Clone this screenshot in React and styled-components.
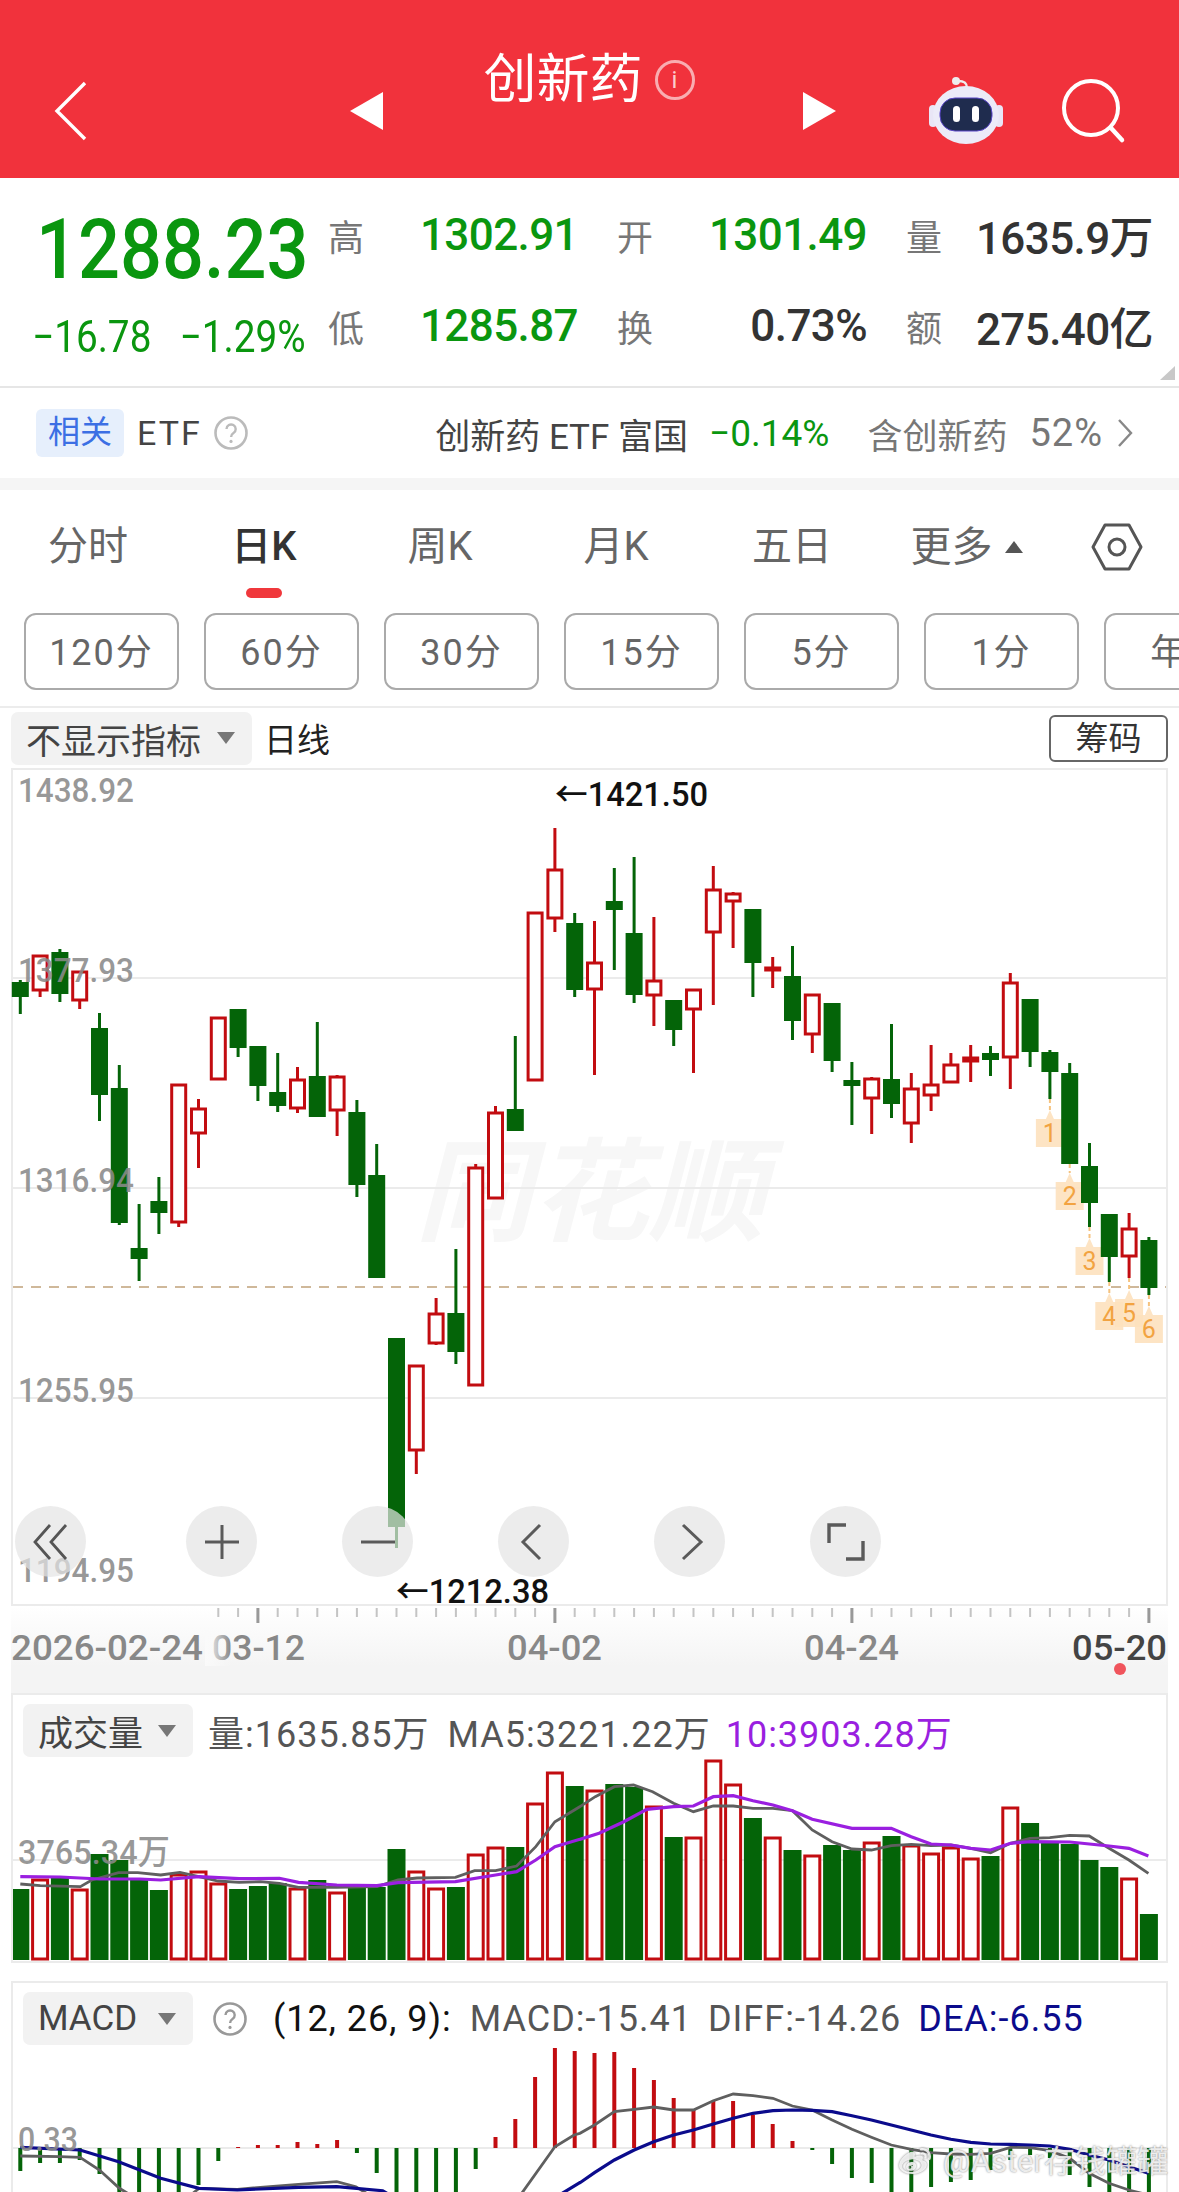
import styled, { createGlobalStyle } from "styled-components";
import { FaWeibo } from "react-icons/fa";

const GlobalStyle = createGlobalStyle`
    html, body {
        margin: 0;
        padding: 0;
        background: #fff;
    }
    body {
        font-family: Roboto, "Noto Sans CJK SC", sans-serif;
        overflow: hidden;
    }
    svg text {
        font-family: Roboto, "Noto Sans CJK SC", sans-serif;
    }
`;

const GREEN_TEXT = "#0a960f";
const CANDLE_GREEN = "#046408";
const CANDLE_RED = "#c20c10";

// [colour, body top, body bottom, wick high, wick low] in page pixels
const candles = [
    ["g", 982, 997, 980, 1014], ["r", 955, 991, 955, 997], ["g", 952, 994, 949, 1002], ["r", 971, 1001, 971, 1009],
    ["g", 1028, 1095, 1013, 1121], ["g", 1088, 1223, 1065, 1225], ["g", 1248, 1259, 1204, 1281], ["g", 1201, 1213, 1177, 1234],
    ["r", 1084, 1223, 1084, 1227], ["r", 1108, 1134, 1099, 1168], ["r", 1017, 1080, 1017, 1080], ["g", 1009, 1048, 1009, 1057],
    ["g", 1046, 1086, 1046, 1101], ["g", 1092, 1106, 1053, 1112], ["r", 1079, 1109, 1067, 1113], ["g", 1076, 1117, 1022, 1117],
    ["r", 1076, 1111, 1075, 1136], ["g", 1112, 1185, 1100, 1197], ["g", 1175, 1278, 1144, 1278], ["g", 1338, 1527, 1338, 1548],
    ["r", 1365, 1451, 1365, 1474], ["r", 1313, 1344, 1298, 1345], ["g", 1313, 1352, 1249, 1364], ["r", 1167, 1386, 1164, 1386],
    ["r", 1112, 1199, 1106, 1199], ["g", 1109, 1131, 1036, 1131], ["r", 912, 1081, 912, 1081], ["r", 869, 919, 828, 932],
    ["g", 923, 990, 913, 997], ["r", 962, 990, 921, 1075], ["g", 901, 910, 868, 970], ["g", 933, 995, 857, 1003],
    ["r", 980, 996, 917, 1026], ["g", 1000, 1030, 1000, 1046], ["r", 989, 1010, 989, 1073], ["r", 889, 933, 866, 1005],
    ["r", 893, 902, 892, 948], ["g", 909, 963, 909, 997], ["r", 967, 971, 957, 988], ["g", 976, 1021, 946, 1040],
    ["r", 994, 1035, 994, 1053], ["g", 1003, 1061, 1003, 1072], ["g", 1080, 1086, 1062, 1125], ["r", 1078, 1099, 1077, 1134],
    ["g", 1079, 1104, 1024, 1118], ["r", 1088, 1124, 1073, 1143], ["r", 1084, 1096, 1045, 1111], ["r", 1064, 1083, 1053, 1083],
    ["r", 1057, 1062, 1045, 1082], ["g", 1053, 1060, 1046, 1076], ["r", 982, 1058, 973, 1089], ["g", 999, 1052, 999, 1067],
    ["g", 1052, 1072, 1050, 1099], ["g", 1073, 1164, 1063, 1164], ["g", 1166, 1203, 1143, 1227], ["g", 1214, 1257, 1214, 1282],
    ["r", 1228, 1257, 1213, 1278], ["g", 1240, 1288, 1237, 1295],
];

const xOf = (i) => 20.3 + 19.8 * i;

// tops of the volume bars, as y on the page
const volumeTops = [
    1889, 1879, 1877, 1889, 1854, 1860, 1880, 1890, 1874, 1871, 1883, 1889, 1886, 1883, 1888, 1880, 1892, 1887, 1887, 1849,
    1871, 1888, 1887, 1854, 1847, 1847, 1803, 1772, 1786, 1790, 1784, 1787, 1806, 1837, 1837, 1760, 1784, 1818, 1837, 1850,
    1855, 1845, 1850, 1842, 1836, 1845, 1853, 1847, 1858, 1856, 1807, 1823, 1843, 1844, 1860, 1867, 1878, 1914,
];

// macd bar ends, as y on the page (zero line at 2148)
const macdEnds = [
    2171, 2163, 2163, 2160, 2174, 2200, 2200, 2200, 2200, 2185, 2161, 2147, 2145, 2145, 2142, 2144, 2140, 2153, 2173, 2200,
    2200, 2200, 2200, 2169, 2137, 2119, 2077, 2048, 2051, 2053, 2052, 2068, 2080, 2098, 2110, 2101, 2101, 2115, 2124, 2141,
    2150, 2164, 2178, 2183, 2200, 2200, 2187, 2182, 2180, 2170, 2160, 2155, 2158, 2175, 2187, 2200, 2200, 2200,
];

// traced from zooms: left half [u, v] maps with 2.613, right half with 2.618
const left = (pts) => pts.map(([u, v]) => `${(u / 2.613).toFixed(1)},${(1680 + v / 3).toFixed(1)}`).join(" ");
const right = (pts) => pts.map(([u, v]) => `${(580 + u / 2.618).toFixed(1)},${(1680 + v / 3).toFixed(1)}`).join(" ");

const volumeGray =
    left([[53, 612], [105, 617], [210, 620], [240, 600], [310, 578], [360, 578], [420, 585], [470, 577], [520, 590], [570, 603], [625, 607], [680, 605], [730, 610], [780, 622], [880, 622], [985, 620], [1040, 600], [1090, 594], [1190, 592], [1240, 572], [1295, 572], [1350, 558], [1400, 500], [1450, 425], [1515, 380]]) +
    " " +
    right([[0, 380], [40, 350], [90, 320], [140, 315], [190, 335], [245, 370], [297, 395], [349, 378], [401, 378], [453, 385], [505, 385], [556, 392], [608, 450], [660, 485], [712, 507], [763, 510], [815, 497], [867, 493], [919, 497], [971, 495], [1023, 505], [1075, 518], [1127, 490], [1178, 475], [1230, 473], [1282, 466], [1333, 468], [1385, 505], [1437, 540], [1488, 580]]);

const volumePurple =
    left([[53, 590], [157, 591], [261, 597], [365, 597], [420, 600], [520, 590], [625, 596], [730, 595], [780, 607], [880, 615], [985, 617], [1040, 608], [1190, 605], [1295, 585], [1350, 575], [1400, 540], [1450, 500], [1515, 478]]) +
    " " +
    right([[0, 478], [50, 460], [115, 425], [175, 388], [245, 380], [297, 378], [349, 350], [401, 347], [453, 362], [505, 375], [556, 392], [608, 418], [712, 445], [815, 445], [867, 470], [919, 492], [971, 495], [1023, 505], [1075, 510], [1127, 490], [1178, 485], [1282, 486], [1385, 498], [1437, 505], [1488, 528]]);

const macdGrayA = left([[53, 1428], [157, 1430], [209, 1432], [260, 1470], [312, 1525], [420, 1600]]);
const macdGrayB = left([[440, 1600], [520, 1525], [620, 1528], [780, 1513], [880, 1505], [930, 1520], [1000, 1570]]);
const macdGrayC =
    left([[1300, 1620], [1360, 1545], [1450, 1400], [1500, 1365], [1515, 1360]]) +
    " " +
    right([[0, 1360], [38, 1335], [90, 1295], [142, 1288], [193, 1281], [245, 1290], [297, 1290], [349, 1262], [401, 1242], [453, 1247], [505, 1255], [556, 1278], [608, 1290], [660, 1320], [712, 1348], [763, 1372], [815, 1395], [867, 1408], [919, 1418], [971, 1422], [1023, 1423], [1075, 1420], [1127, 1402], [1178, 1403], [1230, 1412], [1282, 1435], [1333, 1480], [1385, 1510], [1437, 1530], [1488, 1545]]);
const macdBlueA = left([[53, 1402], [209, 1410], [310, 1445], [420, 1495], [520, 1525], [620, 1530], [780, 1522], [880, 1520], [1000, 1532], [1040, 1560]]);
const macdBlueB =
    left([[1440, 1560], [1515, 1508]]) +
    " " +
    right([[0, 1508], [38, 1478], [90, 1440], [142, 1410], [193, 1385], [245, 1365], [297, 1350], [349, 1332], [401, 1315], [453, 1300], [505, 1292], [556, 1290], [608, 1291], [660, 1295], [712, 1307], [763, 1320], [815, 1335], [867, 1350], [919, 1365], [971, 1378], [1023, 1387], [1075, 1392], [1127, 1393], [1178, 1395], [1230, 1398], [1282, 1408], [1333, 1425], [1385, 1440], [1437, 1460], [1488, 1480]]);

const markers = [
    { n: 1, i: 52, from: 1099, y: 1110 },
    { n: 2, i: 53, from: 1164, y: 1173 },
    { n: 3, i: 54, from: 1227, y: 1238 },
    { n: 4, i: 55, from: 1282, y: 1293 },
    { n: 5, i: 56, from: 1278, y: 1290 },
    { n: 6, i: 57, from: 1295, y: 1306 },
];

const yLabels = [
    ["1438.92", 802],
    ["1377.93", 982],
    ["1316.94", 1192],
    ["1255.95", 1402],
    ["1194.95", 1582],
];

const Page = styled.div`
    position: relative;
    width: 1179px;
    height: 2192px;
    overflow: hidden;
    background: #fff;
`;

const Header = styled.header`
    display: flex;
    align-items: center;
    box-sizing: border-box;
    height: 178px;
    padding: 44px 0 0 54px;
    background: #f1323c;
    color: #fff;
`;

const BackIcon = styled.svg`
    width: 34px;
    height: 60px;
    margin-right: 262px;
`;

const Triangle = styled.span`
    width: 0;
    height: 0;
    border-top: 19px solid transparent;
    border-bottom: 19px solid transparent;
    border-right: ${(p) => (p.$dir === "left" ? "33px solid #fff" : "0")};
    border-left: ${(p) => (p.$dir === "right" ? "33px solid #fff" : "0")};
`;

const TitleBlock = styled.div`
    display: flex;
    align-items: center;
    justify-content: center;
    gap: 12px;
    width: 420px;
    margin-bottom: 62px;
    padding-right: 8px;
    box-sizing: border-box;
`;

const Title = styled.h1`
    margin: 0;
    font-size: 53px;
    font-weight: 400;
    line-height: 60px;
`;

const InfoIcon = styled.span`
    display: flex;
    align-items: center;
    justify-content: center;
    box-sizing: border-box;
    width: 40px;
    height: 40px;
    border: 3px solid rgba(255, 255, 255, 0.6);
    border-radius: 50%;
    color: rgba(255, 255, 255, 0.75);
    font-size: 24px;
    line-height: 1;
`;

const RobotIcon = styled.svg`
    width: 74px;
    height: 68px;
    margin: 0 58px 0 93px;
`;

const SearchIcon = styled.svg`
    width: 66px;
    height: 66px;
`;

const Quote = styled.section`
    position: relative;
    display: flex;
    box-sizing: border-box;
    height: 210px;
    border-bottom: 2px solid #e6e6e6;
`;

const PriceBlock = styled.div`
    width: 328px;
    padding-left: 36px;
    box-sizing: border-box;
`;

const Price = styled.div`
    margin-top: 27px;
    font-size: 84px;
    font-weight: 500;
    line-height: 90px;
    color: ${GREEN_TEXT};
    transform: scaleX(0.88);
    transform-origin: left center;
    white-space: nowrap;
`;

const ChangeRow = styled.div`
    display: flex;
    gap: 32px;
    margin: 19px 0 0 -4px;
    font-size: 44px;
    line-height: 46px;
    color: ${GREEN_TEXT};
    transform: scaleX(0.88);
    transform-origin: left center;
    white-space: nowrap;
`;

const StatsGrid = styled.div`
    display: grid;
    grid-template-columns: 250px 250px 247px;
    grid-auto-rows: 91px;
    column-gap: 39px;
    margin-top: 11px;
`;

const Stat = styled.div`
    display: flex;
    align-items: center;
    justify-content: space-between;
`;

const StatLabel = styled.span`
    font-size: 36px;
    color: #777;
`;

const StatValue = styled.span`
    font-size: 44px;
    font-weight: 500;
    color: ${(p) => (p.$dark ? "#333" : GREEN_TEXT)};
    letter-spacing: -0.6px;
    white-space: nowrap;
`;

const CornerMark = styled.span`
    position: absolute;
    right: 4px;
    bottom: 6px;
    width: 0;
    height: 0;
    border-left: 15px solid transparent;
    border-bottom: 14px solid #c8c8c8;
`;

const EtfRow = styled.section`
    display: flex;
    align-items: center;
    box-sizing: border-box;
    height: 102px;
    padding: 0 46px 0 36px;
    border-bottom: 12px solid #f5f5f5;
`;

const EtfChip = styled.span`
    padding: 0 12px;
    height: 48px;
    line-height: 46px;
    border-radius: 6px;
    background: #e6effc;
    color: #3c6fe4;
    font-size: 32px;
`;

const EtfName = styled.span`
    margin: 0 11px 0 13px;
    font-size: 34px;
    letter-spacing: 2px;
    color: #444;
`;

const HelpIcon = styled.svg`
    flex: none;
    width: 36px;
    height: 36px;
    margin-left: ${(p) => p.$gap || 0}px;
`;

const EtfRight = styled.div`
    display: flex;
    align-items: center;
    margin-left: auto;
    white-space: nowrap;
`;

const EtfFund = styled.span`
    color: #444;
    font-size: 35px;
`;

const EtfChange = styled.span`
    margin: 0 38px 0 21px;
    color: ${GREEN_TEXT};
    font-size: 37px;
`;

const EtfHold = styled.span`
    color: #777;
    font-size: 35px;
`;

const EtfPercent = styled.span`
    margin: 0 14px 0 22px;
    color: #777;
    font-size: 38px;
    letter-spacing: 1px;
`;

const EtfChevron = styled.svg`
    width: 16px;
    height: 30px;
`;

const Tabs = styled.nav`
    display: flex;
    align-items: flex-start;
    height: 110px;
    box-sizing: border-box;
    padding: 32px 0 0 0;
`;

const Tab = styled.div`
    position: relative;
    flex: none;
    width: 176px;
    text-align: center;
    font-size: 40px;
    line-height: 50px;
    color: ${(p) => (p.$active ? "#333" : "#666")};
    font-weight: ${(p) => (p.$active ? 500 : 400)};
`;

const TabBar = styled.span`
    position: absolute;
    left: 70px;
    top: 66px;
    width: 36px;
    height: 10px;
    border-radius: 5px;
    background: #f0383c;
`;

const MoreTab = styled(Tab)`
    display: flex;
    align-items: center;
    justify-content: center;
    gap: 12px;
    width: 173px;
    font-size: 41px;
`;

const UpArrow = styled.span`
    width: 0;
    height: 0;
    border-left: 9px solid transparent;
    border-right: 9px solid transparent;
    border-bottom: 12px solid #555;
`;

const SettingsIcon = styled.svg`
    flex: none;
    width: 52px;
    height: 50px;
    margin-left: 38px;
`;

const Periods = styled.div`
    display: flex;
    gap: 25px;
    box-sizing: border-box;
    height: 108px;
    padding: 13px 0 0 24px;
    border-bottom: 2px solid #ececec;
    overflow: hidden;
`;

const PeriodButton = styled.div`
    flex: none;
    box-sizing: border-box;
    width: 155px;
    height: 77px;
    border: 2px solid #aaa;
    border-radius: 12px;
    text-align: center;
    line-height: 76px;
    font-size: 36px;
    letter-spacing: 2px;
    color: #666;
`;

const IndicatorRow = styled.div`
    display: flex;
    align-items: center;
    height: 60px;
    padding: 0 11px;
`;

const SelectBox = styled.div`
    display: flex;
    align-items: center;
    justify-content: space-between;
    flex: none;
    box-sizing: border-box;
    width: ${(p) => p.$width}px;
    height: 53px;
    padding: 0 17px 0 15px;
    border-radius: 7px;
    background: #f2f2f2;
    font-size: 35px;
    color: #444;
    white-space: nowrap;
`;

const SelectArrow = styled.span`
    width: 0;
    height: 0;
    border-left: 9px solid transparent;
    border-right: 9px solid transparent;
    border-top: 12px solid #777;
`;

const DailyLabel = styled.span`
    margin-left: 12px;
    font-size: 33px;
    color: #222;
`;

const ChipButton = styled.div`
    margin-left: auto;
    box-sizing: border-box;
    width: 119px;
    height: 47px;
    border: 2px solid #666;
    border-radius: 6px;
    text-align: center;
    font-size: 33px;
    line-height: 43px;
    color: #333;
`;

const ChartBox = styled.div`
    position: relative;
    box-sizing: border-box;
    width: 1157px;
    height: 838px;
    margin-left: 11px;
    border: 2px solid #ebebeb;
`;

const ChartSvg = styled.svg`
    display: block;
    overflow: visible;
`;

const Controls = styled.div`
    position: absolute;
    left: 2px;
    top: 736px;
    display: flex;
    gap: 85px;
`;

const ControlButton = styled.div`
    display: flex;
    align-items: center;
    justify-content: center;
    width: 71px;
    height: 71px;
    margin-right: ${(p) => (p.$wide ? 15 : 0)}px;
    border-radius: 50%;
    background: rgba(228, 228, 228, 0.7);
`;

const ControlIcon = styled.svg`
    width: 40px;
    height: 40px;
`;

const AxisWrap = styled.div`
    width: 1157px;
    height: 87px;
    margin-left: 11px;
    background: linear-gradient(#fff, #f4f4f4 70%);
`;

const IndicatorPanel = styled.section`
    box-sizing: border-box;
    width: 1157px;
    height: ${(p) => p.$height}px;
    margin: 0 0 18px 11px;
    border: 2px solid #ebebeb;
    overflow: hidden;
`;

const PanelHeader = styled.div`
    display: flex;
    align-items: center;
    height: 63px;
    padding: 8px 0 0 10px;
    box-sizing: border-box;
    white-space: nowrap;
`;

const PanelText = styled.span`
    margin-left: ${(p) => p.$gap}px;
    font-size: 36px;
    letter-spacing: 1px;
    color: ${(p) => p.$color || "#555"};
`;

const WeiboMark = styled.div`
    position: absolute;
    right: 11px;
    bottom: 12px;
    display: flex;
    align-items: center;
    gap: 10px;
    color: rgba(255, 255, 255, 0.82);
    font-size: 31px;
    line-height: 36px;
    text-shadow: 0 0 2px rgba(90, 90, 90, 0.8);
    white-space: nowrap;
`;

const WeiboIcon = styled(FaWeibo)`
    width: 36px;
    height: 32px;
    filter: drop-shadow(0 0 1px rgba(90, 90, 90, 0.9));
`;

function Help({ color, gap }) {
    return (
        <HelpIcon $gap={gap} viewBox="0 0 36 36">
            <circle cx="18" cy="18" r="15.5" fill="none" stroke={color} strokeWidth="2.6" />
            <path d="M13.5 14a4.6 4.6 0 1 1 7 4c-1.6 1-2.4 1.8-2.4 4" fill="none" stroke={color} strokeWidth="2.4" />
            <circle cx="18" cy="26.4" r="1.6" fill={color} />
        </HelpIcon>
    );
}

function Robot() {
    return (
        <RobotIcon viewBox="0 0 74 68">
            <path d="M38 11C38 5 34 4 29 4" fill="none" stroke="#eee" strokeWidth="2.4" />
            <circle cx="27" cy="4" r="4" fill="#eee" />
            <rect x="0" y="28" width="8" height="22" rx="4" fill="#e9e6f6" />
            <rect x="66" y="28" width="8" height="22" rx="4" fill="#e9e6f6" />
            <ellipse cx="37" cy="38" rx="33" ry="29" fill="#ecebf8" />
            <rect x="11" y="21" width="52" height="33" rx="15" fill="#1f2c4e" stroke="#5a47c8" strokeWidth="1" />
            <rect x="24" y="29" width="7" height="16" rx="3.5" fill="#fff" />
            <rect x="43" y="29" width="7" height="16" rx="3.5" fill="#fff" />
        </RobotIcon>
    );
}

function CandleChart() {
    return (
        <ChartSvg width="1153" height="834" viewBox="13 770 1153 834">
            <text x="415" y="1232" fontSize="112" fontWeight="700" fontStyle="italic" fill="#f7f7f7" textLength="350" lengthAdjust="spacingAndGlyphs">
                同花顺
            </text>
            {[978, 1188, 1398].map((y) => (
                <rect key={y} x="13" y={y - 1} width="1153" height="2" fill="#ebebeb" />
            ))}
            <line x1="13" x2="1166" y1="1287" y2="1287" stroke="#cfb89a" strokeWidth="2" strokeDasharray="10 8" />
            {markers.map((m) => {
                const x = xOf(m.i);
                return (
                    <g key={m.n}>
                        <line x1={x} x2={x} y1={m.from} y2={m.y} stroke="#f5c27e" strokeWidth="2" strokeDasharray="4 3" />
                        <path
                            d={`M${x - 14} ${m.y + 9} L${x - 4} ${m.y + 9} L${x} ${m.y} L${x + 4} ${m.y + 9} L${x + 14} ${m.y + 9} V${m.y + 37} H${x - 14} Z`}
                            fill="#fde1be"
                            fillOpacity="0.9"
                        />
                        <text x={x} y={m.y + 32} fontSize="25" textAnchor="middle" fill="#f2a341">
                            {m.n}
                        </text>
                    </g>
                );
            })}
            {candles.map(([c, top, bottom, high, low], i) => {
                const x = xOf(i);
                const color = c === "g" ? CANDLE_GREEN : CANDLE_RED;
                return (
                    <g key={i}>
                        <rect x={x - 1.5} y={high} width="3" height={low - high} fill={color} />
                        {c === "g" ? (
                            <rect x={x - 8.5} y={top} width="17" height={bottom - top} fill={color} />
                        ) : (
                            <rect x={x - 7} y={top + 1} width="14" height={Math.max(bottom - top - 2, 2)} fill="#fff" stroke={color} strokeWidth="3" />
                        )}
                    </g>
                );
            })}
            {yLabels.map(([label, y]) => (
                <text key={label} x="18" y={y} fontSize="33" fontWeight="500" fill="#8a8a8a" fillOpacity="0.88" textLength="116" lengthAdjust="spacingAndGlyphs">
                    {label}
                </text>
            ))}
            <text x="555" y="806" fontSize="33" fontWeight="500" fill="#111" textLength="153" lengthAdjust="spacingAndGlyphs">
                ←1421.50
            </text>
            <text x="396" y="1603" fontSize="33" fontWeight="500" fill="#111" textLength="153" lengthAdjust="spacingAndGlyphs">
                ←1212.38
            </text>
        </ChartSvg>
    );
}

function TimeAxis() {
    return (
        <ChartSvg width="1157" height="87" viewBox="11 1606 1157 87">
            <defs>
                <linearGradient id="axisFade" x1="0" x2="1" y1="0" y2="0">
                    <stop offset="0" stopColor="#fafafa" stopOpacity="1" />
                    <stop offset="1" stopColor="#fafafa" stopOpacity="0" />
                </linearGradient>
            </defs>
            {candles.map((_, i) => {
                if (i < 10) return null;
                const major = (i - 12) % 15 === 0;
                return (
                    <rect
                        key={i}
                        x={xOf(i) - (major ? 1.5 : 1)}
                        y="1608"
                        width={major ? 3 : 2}
                        height={major ? 15 : 9}
                        fill={major ? "#999" : "#c4c4c4"}
                    />
                );
            })}
            <text x="11" y="1660" fontSize="35" fontWeight="500" fill="#888" textLength="192" lengthAdjust="spacingAndGlyphs">
                2026-02-24
            </text>
            <text x="212" y="1660" fontSize="35" fontWeight="500" fill="#888" textLength="93" lengthAdjust="spacingAndGlyphs">
                03-12
            </text>
            <rect x="205" y="1630" width="26" height="36" fill="url(#axisFade)" />
            <text x="507" y="1660" fontSize="35" fontWeight="500" fill="#888" textLength="95" lengthAdjust="spacingAndGlyphs">
                04-02
            </text>
            <text x="804" y="1660" fontSize="35" fontWeight="500" fill="#888" textLength="95" lengthAdjust="spacingAndGlyphs">
                04-24
            </text>
            <text x="1072" y="1660" fontSize="35" fontWeight="500" fill="#444" textLength="95" lengthAdjust="spacingAndGlyphs">
                05-20
            </text>
            <circle cx="1120" cy="1669" r="6" fill="#f0545c" />
        </ChartSvg>
    );
}

function VolumeChart() {
    return (
        <ChartSvg width="1153" height="202" viewBox="13 1758 1153 202">
            <rect x="13" y="1859" width="1153" height="2" fill="#ebebeb" />
            {volumeTops.map((top, i) => {
                const x = xOf(i);
                return candles[i][0] === "g" ? (
                    <rect key={i} x={x - 9} y={top} width="18" height={1960 - top} fill={CANDLE_GREEN} />
                ) : (
                    <rect key={i} x={x - 7.5} y={top + 1} width="15" height={1958 - top} fill="#fff" stroke={CANDLE_RED} strokeWidth="3" />
                );
            })}
            <polyline points={volumeGray} fill="none" stroke="#5f5f5f" strokeWidth="2.8" />
            <polyline points={volumePurple} fill="none" stroke="#9a1fe0" strokeWidth="3.2" />
            <text x="18" y="1864" fontSize="34" fontWeight="500" fill="#8a8a8a" fillOpacity="0.88" textLength="152" lengthAdjust="spacingAndGlyphs">
                3765.34万
            </text>
        </ChartSvg>
    );
}

function MacdChart() {
    return (
        <ChartSvg width="1153" height="146" viewBox="13 2046 1153 146">
            <rect x="13" y="2147" width="1153" height="2" fill="#ebebeb" />
            {macdEnds.map((end, i) => {
                const x = xOf(i);
                const up = end < 2148;
                return (
                    <rect
                        key={i}
                        x={x - 2}
                        y={up ? end : 2148}
                        width="4"
                        height={Math.abs(end - 2148)}
                        fill={up ? CANDLE_RED : CANDLE_GREEN}
                    />
                );
            })}
            <polyline points={macdGrayA} fill="none" stroke="#5f5f5f" strokeWidth="2.8" />
            <polyline points={macdGrayB} fill="none" stroke="#5f5f5f" strokeWidth="2.8" />
            <polyline points={macdGrayC} fill="none" stroke="#5f5f5f" strokeWidth="2.8" />
            <polyline points={macdBlueA} fill="none" stroke="#0b0b8c" strokeWidth="3.2" />
            <polyline points={macdBlueB} fill="none" stroke="#0b0b8c" strokeWidth="3.2" />
            <text x="18" y="2151" fontSize="33" fontWeight="500" fill="#8a8a8a" fillOpacity="0.88" textLength="60" lengthAdjust="spacingAndGlyphs">
                0.33
            </text>
        </ChartSvg>
    );
}

function App() {
    return (
        <Page>
            <GlobalStyle />
            <Header>
                <BackIcon viewBox="0 0 34 60">
                    <path d="M31 2 L3 30 L31 58" fill="none" stroke="#fff" strokeWidth="3.4" />
                </BackIcon>
                <Triangle $dir="left" />
                <TitleBlock>
                    <Title>创新药</Title>
                    <InfoIcon>i</InfoIcon>
                </TitleBlock>
                <Triangle $dir="right" />
                <Robot />
                <SearchIcon viewBox="0 0 66 66">
                    <circle cx="30" cy="30" r="27" fill="none" stroke="#fff" strokeWidth="4" />
                    <path d="M50 50 L61 62" stroke="#fff" strokeWidth="4.5" strokeLinecap="round" />
                </SearchIcon>
            </Header>

            <Quote>
                <PriceBlock>
                    <Price>1288.23</Price>
                    <ChangeRow>
                        <span>−16.78</span>
                        <span>−1.29%</span>
                    </ChangeRow>
                </PriceBlock>
                <StatsGrid>
                    <Stat>
                        <StatLabel>高</StatLabel>
                        <StatValue>1302.91</StatValue>
                    </Stat>
                    <Stat>
                        <StatLabel>开</StatLabel>
                        <StatValue>1301.49</StatValue>
                    </Stat>
                    <Stat>
                        <StatLabel>量</StatLabel>
                        <StatValue $dark>1635.9万</StatValue>
                    </Stat>
                    <Stat>
                        <StatLabel>低</StatLabel>
                        <StatValue>1285.87</StatValue>
                    </Stat>
                    <Stat>
                        <StatLabel>换</StatLabel>
                        <StatValue $dark>0.73%</StatValue>
                    </Stat>
                    <Stat>
                        <StatLabel>额</StatLabel>
                        <StatValue $dark>275.40亿</StatValue>
                    </Stat>
                </StatsGrid>
                <CornerMark />
            </Quote>

            <EtfRow>
                <EtfChip>相关</EtfChip>
                <EtfName>ETF</EtfName>
                <Help color="#bbb" />
                <EtfRight>
                    <EtfFund>创新药 ETF 富国</EtfFund>
                    <EtfChange>−0.14%</EtfChange>
                    <EtfHold>含创新药</EtfHold>
                    <EtfPercent>52%</EtfPercent>
                    <EtfChevron viewBox="0 0 16 30">
                        <path d="M2 2 L14 15 L2 28" fill="none" stroke="#888" strokeWidth="2.4" />
                    </EtfChevron>
                </EtfRight>
            </EtfRow>

            <Tabs>
                <Tab>分时</Tab>
                <Tab $active>
                    日K
                    <TabBar />
                </Tab>
                <Tab>周K</Tab>
                <Tab>月K</Tab>
                <Tab>五日</Tab>
                <MoreTab>
                    更多
                    <UpArrow />
                </MoreTab>
                <SettingsIcon viewBox="0 0 52 50">
                    <path d="M14 3 H38 L50 25 L38 47 H14 L2 25 Z" fill="none" stroke="#555" strokeWidth="3" strokeLinejoin="round" />
                    <circle cx="26" cy="25" r="8" fill="none" stroke="#555" strokeWidth="3" />
                </SettingsIcon>
            </Tabs>

            <Periods>
                {["120分", "60分", "30分", "15分", "5分", "1分", "年K"].map((p) => (
                    <PeriodButton key={p}>{p}</PeriodButton>
                ))}
            </Periods>

            <IndicatorRow>
                <SelectBox $width={241}>
                    不显示指标
                    <SelectArrow />
                </SelectBox>
                <DailyLabel>日线</DailyLabel>
                <ChipButton>筹码</ChipButton>
            </IndicatorRow>

            <ChartBox>
                <CandleChart />
                <Controls>
                    <ControlButton $wide>
                        <ControlIcon viewBox="0 0 40 40">
                            <path d="M19 3 L4 20 L19 37 M35 3 L20 20 L35 37" fill="none" stroke="#555" strokeWidth="2.8" />
                        </ControlIcon>
                    </ControlButton>
                    <ControlButton>
                        <ControlIcon viewBox="0 0 40 40">
                            <path d="M20 3 V37 M3 20 H37" fill="none" stroke="#5a5a5a" strokeWidth="3" />
                        </ControlIcon>
                    </ControlButton>
                    <ControlButton>
                        <ControlIcon viewBox="0 0 40 40">
                            <path d="M3 20 H37" fill="none" stroke="#5a5a5a" strokeWidth="3" />
                        </ControlIcon>
                    </ControlButton>
                    <ControlButton>
                        <ControlIcon viewBox="0 0 40 40">
                            <path d="M26 3 L9 20 L26 37" fill="none" stroke="#5a5a5a" strokeWidth="3" />
                        </ControlIcon>
                    </ControlButton>
                    <ControlButton>
                        <ControlIcon viewBox="0 0 40 40">
                            <path d="M13 3 L31 20 L13 37" fill="none" stroke="#5a5a5a" strokeWidth="3" />
                        </ControlIcon>
                    </ControlButton>
                    <ControlButton>
                        <ControlIcon viewBox="0 0 40 40">
                            <path d="M3 21 V3 H20 M37 19 V37 H20" fill="none" stroke="#5a5a5a" strokeWidth="3.4" />
                        </ControlIcon>
                    </ControlButton>
                </Controls>
            </ChartBox>

            <AxisWrap>
                <TimeAxis />
            </AxisWrap>

            <IndicatorPanel $height={270}>
                <PanelHeader>
                    <SelectBox $width={170}>
                        成交量
                        <SelectArrow />
                    </SelectBox>
                    <PanelText $gap={15}>量:1635.85万</PanelText>
                    <PanelText $gap={18}>MA5:3221.22万</PanelText>
                    <PanelText $gap={15} $color="#9a1fe0">
                        10:3903.28万
                    </PanelText>
                </PanelHeader>
                <VolumeChart />
            </IndicatorPanel>

            <IndicatorPanel $height={232}>
                <PanelHeader>
                    <SelectBox $width={170}>
                        MACD
                        <SelectArrow />
                    </SelectBox>
                    <Help color="#999" gap={19} />
                    <PanelText $gap={25} $color="#111">
                        (12, 26, 9):
                    </PanelText>
                    <PanelText $gap={18}>MACD:-15.41</PanelText>
                    <PanelText $gap={16}>DIFF:-14.26</PanelText>
                    <PanelText $gap={17} $color="#0b0b8c">
                        DEA:-6.55
                    </PanelText>
                </PanelHeader>
                <MacdChart />
            </IndicatorPanel>

            <WeiboMark>
                <WeiboIcon />
                <span>@Aster存钱罐罐</span>
            </WeiboMark>
        </Page>
    );
}

export default App;
